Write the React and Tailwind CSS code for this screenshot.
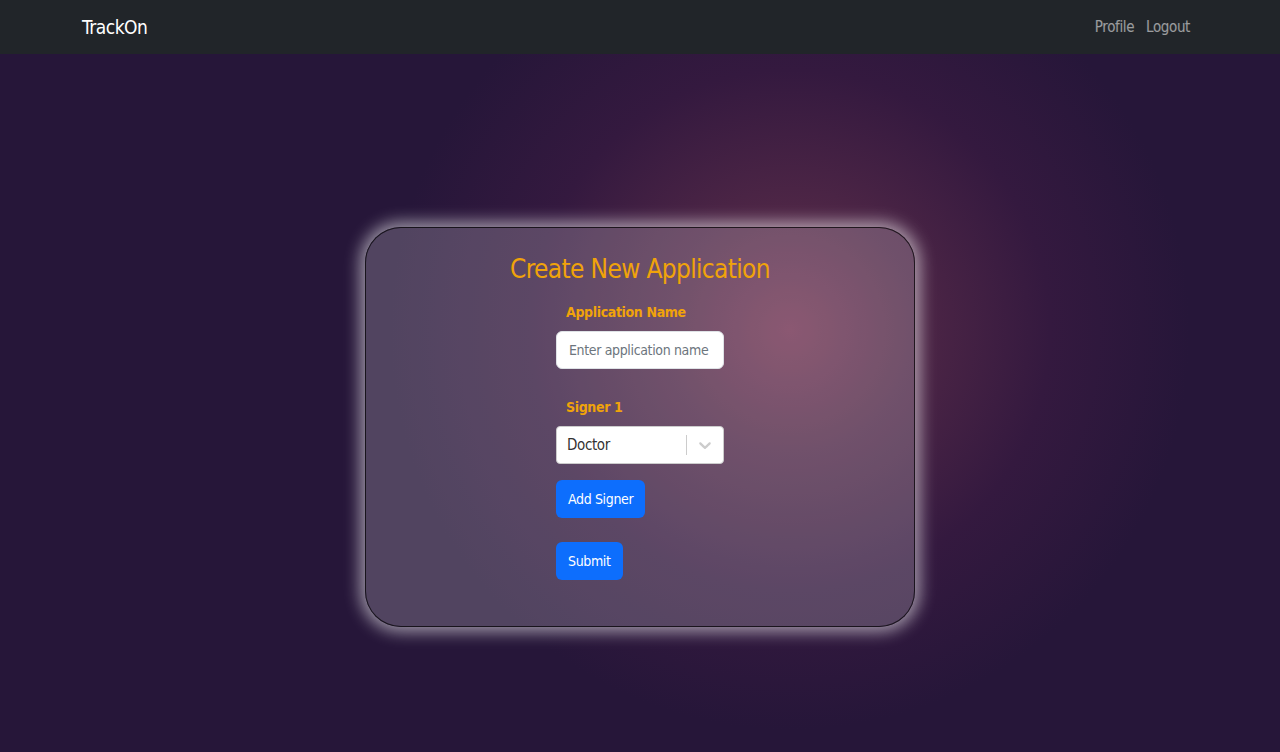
import React from "react";

const font = { fontFamily: '"Liberation Sans Narrow", "DejaVu Sans Condensed", "DejaVu Sans", sans-serif' };

export default function App() {
  return (
    <div
      className="min-h-[752px] w-full flex flex-col bg-[#261639]"
      style={{
        ...font,
        backgroundImage:
          "radial-gradient(circle at 790px 330px, #6e2f4f 0px, #4e2646 120px, #34193f 260px, #261639 400px)",
      }}
    >
      <nav className="h-[54px] bg-[#212529] flex items-center">
        <div className="w-[1140px] mx-auto px-3 flex items-center justify-between">
          <span className="text-white text-[19px] tracking-tight">TrackOn</span>
          <div className="flex">
            <span className="px-[6px] text-[15px] text-white/55 tracking-tight">Profile</span>
            <span className="pl-[6px] pr-2 text-[15px] text-white/55 tracking-tight">Logout</span>
          </div>
        </div>
      </nav>
      <div className="flex justify-center pt-[173px]">
        <div className="w-[550px] h-[400px] rounded-[36px] border border-black/70 bg-white/20 shadow-[0_0_16px_5px_rgba(255,255,255,0.55)] flex flex-col items-center pt-[23px]">
          <h2 className="text-[#f0a30a] text-[26px] leading-[36px] tracking-tight">Create New Application</h2>
          <form className="w-[168px] mt-[13px] flex flex-col">
            <label className="pl-[10px] text-[#f0a30a] font-bold text-[14px] leading-[24px] tracking-tight">Application Name</label>
            <input
              className="mt-[7px] h-[38px] w-full rounded-[6px] bg-white border border-[#dee2e6] pl-3 pr-1 text-[14px] text-[#212529] placeholder:text-[#6c757d] outline-none tracking-tight"
              placeholder="Enter application name"
              style={font}
            />
            <label className="mt-[26px] pl-[10px] text-[#f0a30a] font-bold text-[14px] leading-[24px] tracking-tight">Signer 1</label>
            <div className="mt-[7px] h-[38px] w-full rounded-[4px] bg-white border border-[#cccccc] flex items-center">
              <span className="flex-1 pl-[10px] text-[15px] text-[#333333] tracking-tight">Doctor</span>
              <span className="w-px h-[20px] bg-[#cccccc]" />
              <span className="w-[36px] flex justify-center">
                <svg width="20" height="20" viewBox="0 0 20 20" fill="#cccccc">
                  <path d="M4.516 7.548c0.436-0.446 1.043-0.481 1.576 0l3.908 3.747 3.908-3.747c0.533-0.481 1.141-0.446 1.574 0 0.436 0.445 0.408 1.197 0 1.615-0.406 0.418-4.695 4.502-4.695 4.502-0.217 0.223-0.502 0.335-0.787 0.335s-0.57-0.112-0.789-0.335c0 0-4.287-4.084-4.695-4.502s-0.436-1.17 0-1.615z" />
                </svg>
              </span>
            </div>
            <button type="button" className="mt-[16px] self-start h-[38px] px-3 rounded-[6px] bg-[#0d6efd] text-white text-[14px] tracking-tight" style={font}>Add Signer</button>
            <button type="button" className="mt-[24px] self-start h-[38px] px-3 rounded-[6px] bg-[#0d6efd] text-white text-[14px] tracking-tight" style={font}>Submit</button>
          </form>
        </div>
      </div>
    </div>
  );
}
